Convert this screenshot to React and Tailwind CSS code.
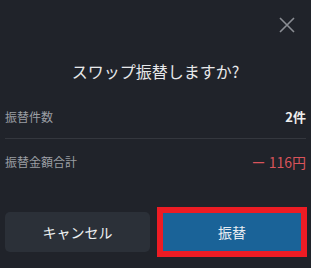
const App = () => {
  return (
    <div
      className="w-[311px] h-[268px] bg-[#20232a] text-white flex flex-col"
      style={{ fontFamily: '"Noto Sans CJK JP", "Noto Sans", sans-serif' }}
    >
      {/* header */}
      <div className="flex justify-end pt-[17px] pr-[16px] h-[42px]">
        <svg width="16" height="16" viewBox="0 0 16 16" className="text-[#8a8d93]">
          <path d="M1 1 L15 15 M15 1 L1 15" stroke="currentColor" strokeWidth="1.6" fill="none" />
        </svg>
      </div>

      <h2 className="text-center text-[16px] leading-[22px] text-[#e8e9eb] mt-[18px]">
        スワップ振替しますか?
      </h2>

      {/* summary rows */}
      <div className="mx-[5px] mt-[24px]">
        <div className="flex justify-between items-center h-[33px] pb-[10px] border-b border-[#34373e]">
          <span className="text-[12px] text-[#9b9ea4]">振替件数</span>
          <span className="text-[13px] font-bold text-[#eeeeee]">2件</span>
        </div>
        <div className="flex justify-between items-center h-[43px] pt-[3px]">
          <span className="text-[12px] text-[#9b9ea4]">振替金額合計</span>
          <span className="text-[14px] text-[#d9545b]">ー 116円</span>
        </div>
      </div>

      {/* buttons */}
      <div className="flex items-center mt-[25px] ml-[5px] gap-[7px]">
        <button className="w-[145px] h-[40px] rounded-[5px] bg-[#2b3038] text-[14px] text-[#eef0f2]">
          キャンセル
        </button>
        <div className="w-[150px] h-[50px] border-[6px] border-[#ed1c24] flex items-center justify-center">
          <button className="w-full h-full bg-[#1a6398] text-[14px] text-[#e8edf2]">
            振替
          </button>
        </div>
      </div>
    </div>
  );
};

export default App;
